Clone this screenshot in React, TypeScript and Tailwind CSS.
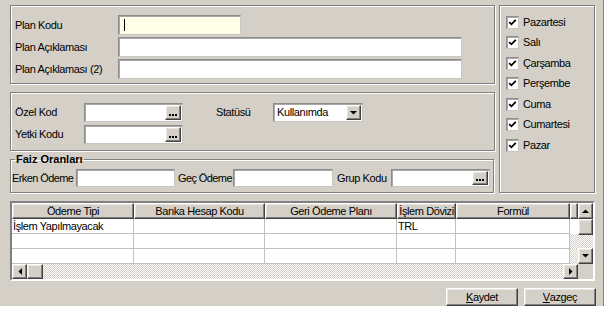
import React from "react";

// klasik windows kenarlıkları
const raised =
  "border border-t-white border-l-white border-b-[#404040] border-r-[#404040] shadow-[inset_-1px_-1px_0_#808080,inset_1px_1px_0_#e8e6e0]";
const sunken =
  "border border-t-[#8c8c8c] border-l-[#8c8c8c] border-b-[#c8c6c0] border-r-[#c8c6c0] shadow-[inset_1px_1px_0_#a8a8a8]";
const etched =
  "border border-[#808080] shadow-[inset_1px_1px_0_#fff,1px_1px_0_#fff]";
const checker =
  "bg-[repeating-conic-gradient(#ffffff_0_25%,#d4d0c8_0_50%)] bg-[length:2px_2px]";

const days = [
  "Pazartesi",
  "Salı",
  "Çarşamba",
  "Perşembe",
  "Cuma",
  "Cumartesi",
  "Pazar",
];

const columns = [
  { title: "Ödeme Tipi", w: "w-[122px]" },
  { title: "Banka Hesap Kodu", w: "w-[131px]" },
  { title: "Geri Ödeme Planı", w: "w-[132px]" },
  { title: "İşlem Dövizi", w: "w-[59px]" },
  { title: "Formül", w: "w-[114px]" },
];

const rows = [
  ["İşlem Yapılmayacak", "", "", "TRL", ""],
  ["", "", "", "", ""],
  ["", "", "", "", ""],
];

const Arrow: React.FC<{ dir: "up" | "down" | "left" | "right" }> = ({ dir }) => {
  const pts = {
    up: "0,4 7,4 3.5,0.5",
    down: "0,0 7,0 3.5,3.5",
    left: "4,0 4,7 0.5,3.5",
    right: "0,0 0,7 3.5,3.5",
  }[dir];
  const vertical = dir === "up" || dir === "down";
  return (
    <svg
      width={vertical ? 7 : 4}
      height={vertical ? 4 : 7}
      viewBox={vertical ? "0 0 7 4" : "0 0 4 7"}
    >
      <polygon points={pts} fill="#000" />
    </svg>
  );
};

const Dots = () => (
  <div className={`${raised} w-[16px] h-full flex items-end justify-center gap-[1px] pb-[3px] bg-[#d4d0c8] shrink-0`}>
    <span className="w-[2px] h-[2px] bg-black" />
    <span className="w-[2px] h-[2px] bg-black" />
    <span className="w-[2px] h-[2px] bg-black" />
  </div>
);

const LookupInput: React.FC<{ w: string; h: string }> = ({ w, h }) => (
  <div className={`${sunken} ${w} ${h} shrink-0 bg-white flex justify-end p-[1px]`}>
    <Dots />
  </div>
);

const Check = () => (
  <div className={`${sunken} w-[13px] h-[13px] bg-white flex items-center justify-center shrink-0`}>
    <svg width="9" height="9" viewBox="0 0 9 9">
      <path d="M1.2 4.2 L3.4 6.4 L7.8 1.8" stroke="#000" strokeWidth="1.7" fill="none" />
    </svg>
  </div>
);

export default function App() {
  return (
    <div className="w-[604px] h-[306px] bg-[#d4d0c8] border-r border-[#808080] pt-[5px] pl-[10px] flex flex-col font-['Liberation_Sans',Arial,sans-serif] text-[11px] tracking-[-0.4px] whitespace-nowrap text-black leading-[13px]">
      <div className="flex gap-[4px] h-[188px]">
        <div className="w-[485px] flex flex-col">
          {/* plan bilgileri */}
          <div className={`${etched} h-[79px] pt-[9px] pl-[4px] flex flex-col gap-[2px]`}>
            <div className="flex items-center h-[20px]">
              <span className="w-[103px] shrink-0">Plan Kodu</span>
              <div className={`${sunken} w-[123px] h-[20px] bg-[#fefee8] flex items-center pl-[5px]`}>
                <span className="w-px h-[12px] bg-black" />
              </div>
            </div>
            <div className="flex items-center h-[20px]">
              <span className="w-[103px] shrink-0">Plan Açıklaması</span>
              <div className={`${sunken} w-[344px] h-[20px] bg-white`} />
            </div>
            <div className="flex items-center h-[20px]">
              <span className="w-[103px] shrink-0">Plan Açıklaması (2)</span>
              <div className={`${sunken} w-[344px] h-[20px] bg-white`} />
            </div>
          </div>

          {/* kodlar */}
          <div className={`${etched} mt-[8px] h-[59px] pt-[10px] pl-[4px] flex flex-col gap-[3px]`}>
            <div className="flex items-center h-[19px]">
              <span className="w-[69px] shrink-0">Özel Kod</span>
              <LookupInput w="w-[99px]" h="h-[19px]" />
              <span className="ml-[33px] w-[57px] shrink-0">Statüsü</span>
              <div className={`${sunken} w-[90px] h-[19px] shrink-0 bg-white flex items-center justify-between p-[1px] pl-[3px]`}>
                <span>Kullanımda</span>
                <div className={`${raised} w-[15px] h-full bg-[#d4d0c8] flex items-center justify-center`}>
                  <Arrow dir="down" />
                </div>
              </div>
            </div>
            <div className="flex items-center h-[19px]">
              <span className="w-[69px] shrink-0">Yetki Kodu</span>
              <LookupInput w="w-[99px]" h="h-[19px]" />
            </div>
          </div>

          {/* faiz oranları */}
          <fieldset className={`${etched} mt-[2px] h-[40px] w-[484px] pl-[1px]`}>
            <legend className="ml-[3px] px-[1px] font-bold leading-[13px] tracking-[0px]">Faiz Oranları</legend>
            <div className="flex items-center mt-[3px] h-[18px]">
              <span className="w-[64px] shrink-0 tracking-[-0.6px]">Erken Ödeme</span>
              <div className={`${sunken} w-[99px] h-[18px] shrink-0 bg-white`} />
              <span className="ml-[3px] w-[55px] shrink-0 tracking-[-0.6px]">Geç Ödeme</span>
              <div className={`${sunken} w-[100px] h-[18px] shrink-0 bg-white`} />
              <span className="ml-[4px] w-[54px] shrink-0">Grup Kodu</span>
              <LookupInput w="w-[99px]" h="h-[18px]" />
            </div>
          </fieldset>
        </div>

        {/* günler */}
        <div className={`${etched} w-[96px] h-[188px] pt-[6px] pl-[6px] flex flex-col`}>
          {days.map((d) => (
            <div key={d} className="flex items-center h-[20.5px]">
              <Check />
              <span className="ml-[4px]">{d}</span>
            </div>
          ))}
        </div>
      </div>

      {/* tablo */}
      <div className="mt-[8px] w-[585px] h-[80px] border-2 border-t-[#808080] border-l-[#808080] border-b-white border-r-white flex flex-col">
        <div className="flex h-[61px]">
          <div className="w-[566px] flex flex-col bg-white">
            <div className="flex h-[16px] bg-[#d4d0c8]">
              {columns.map((c) => (
                <div key={c.title} className={`${raised} ${c.w} shrink-0 h-full flex items-center justify-center`}>
                  {c.title}
                </div>
              ))}
              <div className={`${raised} flex-1 h-full`} />
            </div>
            {rows.map((r, i) => (
              <div key={i} className="flex h-[15px]">
                {r.map((cell, j) => (
                  <div
                    key={j}
                    className={`${columns[j].w} shrink-0 h-full border-r border-b border-[#c0c0c0] pl-[1px] flex items-center`}
                  >
                    {cell}
                  </div>
                ))}
                <div className={`flex-1 h-full ${i === 0 ? "bg-white" : checker}`} />
              </div>
            ))}
          </div>
          <div className="w-[15px] flex flex-col">
            <div className={`${raised} h-[16px] bg-[#d4d0c8] flex items-center justify-center`}>
              <Arrow dir="up" />
            </div>
            <div className={`${raised} h-[16px] bg-[#d4d0c8]`} />
            <div className={`flex-1 ${checker}`} />
            <div className={`${raised} h-[16px] bg-[#d4d0c8] flex items-center justify-center`}>
              <Arrow dir="down" />
            </div>
          </div>
        </div>
        <div className="flex flex-1">
          <div className="w-[566px] flex">
            <div className={`${raised} w-[15px] h-full bg-[#d4d0c8] flex items-center justify-center`}>
              <Arrow dir="left" />
            </div>
            <div className={`${raised} w-[16px] h-full bg-[#d4d0c8]`} />
            <div className={`flex-1 ${checker}`} />
            <div className={`${raised} w-[15px] h-full bg-[#d4d0c8] flex items-center justify-center`}>
              <Arrow dir="right" />
            </div>
          </div>
          <div className="w-[15px] bg-[#d4d0c8]" />
        </div>
      </div>

      {/* butonlar */}
      <div className="mt-[7px] flex justify-end gap-[6px] pr-[7px]">
        <button className={`${raised} w-[72px] h-[18px] bg-[#d4d0c8] flex items-center justify-center`}>
          <span className="underline">K</span>aydet
        </button>
        <button className={`${raised} w-[72px] h-[18px] bg-[#d4d0c8] flex items-center justify-center`}>
          <span className="underline">V</span>azgeç
        </button>
      </div>
    </div>
  );
}
